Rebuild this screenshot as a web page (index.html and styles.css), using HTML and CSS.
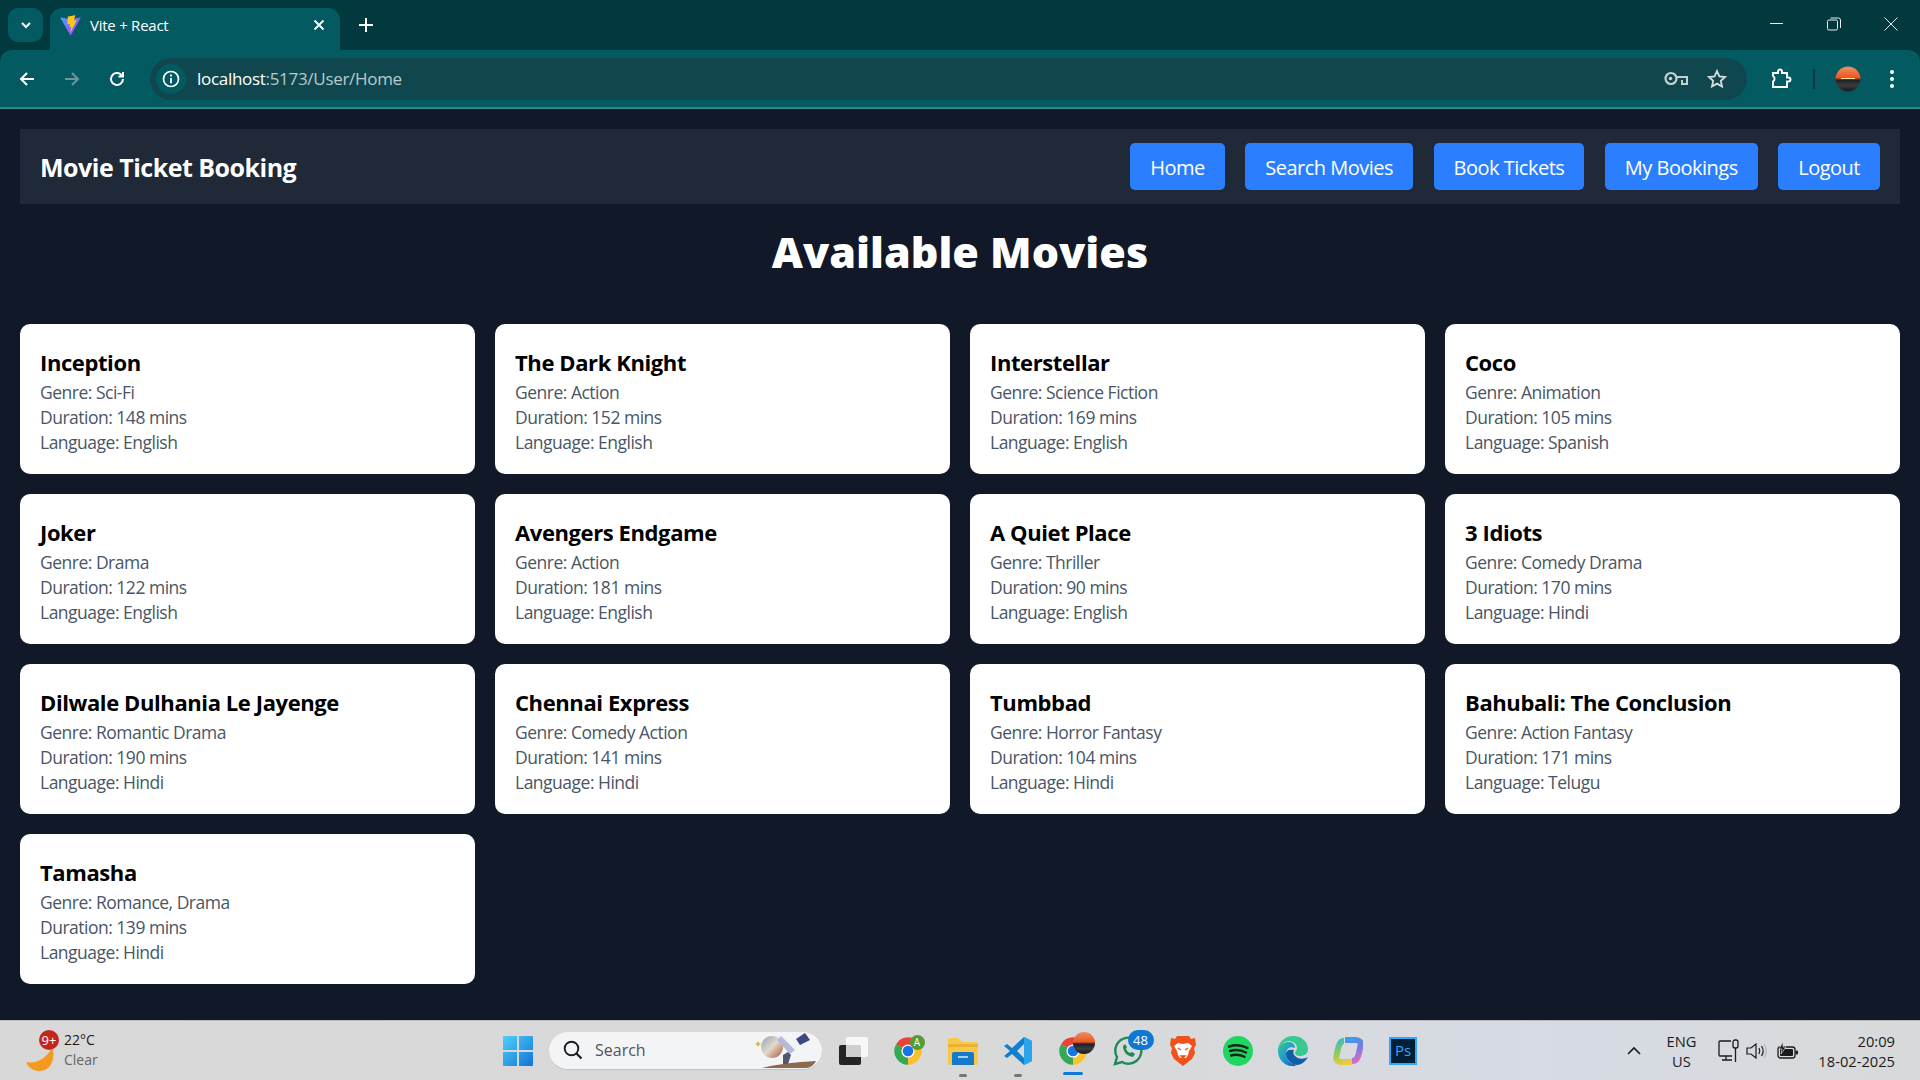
FILE: index.html
```html
<!DOCTYPE html>
<html lang="en">
<head>
  <meta charset="UTF-8">
  <title>Vite + React</title>
  <link rel="stylesheet" href="styles.css">
</head>
<body>
  <svg class="defs" width="0" height="0">
    <defs>
      <symbol id="chrome" viewBox="0 0 48 48">
        <path d="M24 24L4.95 13A22 22 0 0 1 43.05 13Z" fill="#ea4335"/>
        <path d="M24 24L43.05 13A22 22 0 0 1 24 46Z" fill="#fbc02d"/>
        <path d="M24 24L24 46A22 22 0 0 1 4.95 13Z" fill="#34a853"/>
        <circle cx="24" cy="24" r="10.5" fill="#fff"/>
        <circle cx="24" cy="24" r="8.5" fill="#1a73e8"/>
      </symbol>
      <linearGradient id="sunset" x1="0" y1="0" x2="0" y2="1">
        <stop offset="0" stop-color="#e8926a"/>
        <stop offset=".45" stop-color="#f2541b"/>
        <stop offset=".55" stop-color="#1d2024"/>
        <stop offset=".75" stop-color="#3b3d40"/>
        <stop offset="1" stop-color="#16181b"/>
      </linearGradient>
      <linearGradient id="viteBody" x1="0" y1="0" x2="1" y2="1">
        <stop offset="0" stop-color="#41a5ff"/>
        <stop offset="1" stop-color="#bd34fe"/>
      </linearGradient>
      <linearGradient id="winTile" x1="0" y1="0" x2="1" y2="1">
        <stop offset="0" stop-color="#4fd0fb"/>
        <stop offset="1" stop-color="#0f74d6"/>
      </linearGradient>
      <linearGradient id="edgeBody" x1="0" y1="0" x2="1" y2="1">
        <stop offset="0" stop-color="#39c88f"/>
        <stop offset=".55" stop-color="#1b94d6"/>
        <stop offset="1" stop-color="#0c59a4"/>
      </linearGradient>
      <linearGradient id="copilotA" gradientUnits="userSpaceOnUse" x1="12" y1="2" x2="26" y2="26">
        <stop offset="0" stop-color="#2fa5e8"/>
        <stop offset=".5" stop-color="#6f7de8"/>
        <stop offset="1" stop-color="#e56ac0"/>
      </linearGradient>
      <linearGradient id="copilotB" gradientUnits="userSpaceOnUse" x1="6" y1="4" x2="14" y2="28">
        <stop offset="0" stop-color="#3dc0b0"/>
        <stop offset=".6" stop-color="#a8cc50"/>
        <stop offset="1" stop-color="#f6c93d"/>
      </linearGradient>
      <linearGradient id="planet" x1="0" y1="0" x2="1" y2="1">
        <stop offset="0" stop-color="#8aa3b5"/>
        <stop offset=".5" stop-color="#e5d9c8"/>
        <stop offset="1" stop-color="#a5533a"/>
      </linearGradient>
    </defs>
  </svg>

  <header class="chrome">
    <div class="tabstrip">
      <div class="tab-search">
        <svg width="14" height="14" viewBox="0 0 14 14"><path d="M3 5l4 4 4-4" fill="none" stroke="#fff" stroke-width="2"/></svg>
      </div>
      <div class="tab">
        <svg class="favicon" width="21" height="25" viewBox="0 0 410 404">
          <path d="M399.641 59.5246L215.643 388.545C211.844 395.338 202.084 395.378 198.228 388.618L10.5817 59.5563C6.38087 52.1896 12.6802 43.2665 21.0281 44.7586L205.223 77.6824C206.398 77.8924 207.601 77.8904 208.776 77.6763L389.119 44.8058C397.439 43.2894 403.768 52.1434 399.641 59.5246Z" fill="url(#viteBody)"/>
          <path d="M292.965 1.5744L156.801 28.2552C154.563 28.6937 152.906 30.5903 152.771 32.8664L144.395 174.33C144.198 177.662 147.258 180.248 150.51 179.498L188.42 170.749C191.967 169.931 195.172 173.055 194.443 176.622L183.18 231.775C182.422 235.487 185.907 238.661 189.532 237.56L212.947 230.446C216.577 229.344 220.065 232.527 219.297 236.242L201.398 322.875C200.278 328.294 207.486 331.249 210.492 326.603L212.5 323.5L323.454 102.072C325.312 98.3645 322.108 94.137 318.036 94.9228L279.014 102.454C275.347 103.161 272.227 99.746 273.262 96.1583L298.731 7.86689C299.767 4.27314 296.636 0.855181 292.965 1.5744Z" fill="#ffc517"/>
        </svg>
        <span class="tab-title">Vite + React</span>
        <svg class="tab-close" width="12" height="12" viewBox="0 0 12 12"><path d="M1.5 1.5l9 9M10.5 1.5l-9 9" stroke="#fff" stroke-width="1.8"/></svg>
      </div>
      <svg class="new-tab" width="14" height="14" viewBox="0 0 14 14"><path d="M7 0v14M0 7h14" stroke="#fff" stroke-width="2"/></svg>
      <div class="window-controls">
        <svg width="14" height="14" viewBox="0 0 14 14"><path d="M0 6.5h13" stroke="#e8eeee" stroke-width="1"/></svg>
        <svg width="14" height="14" viewBox="0 0 14 14"><rect x=".5" y="3" width="10" height="10" rx="1.5" fill="none" stroke="#e8eeee"/><path d="M3.5 1h8a2 2 0 0 1 2 2v8" fill="none" stroke="#e8eeee"/></svg>
        <svg width="14" height="14" viewBox="0 0 14 14"><path d="M.5.5l13 13M13.5.5l-13 13" stroke="#e8eeee" stroke-width="1"/></svg>
      </div>
    </div>
    <div class="toolbar">
      <div class="nav-icons">
        <svg width="18" height="18" viewBox="0 0 18 18"><path d="M16 9H3M9 3L3 9l6 6" fill="none" stroke="#fff" stroke-width="2"/></svg>
        <svg width="18" height="18" viewBox="0 0 18 18"><path d="M2 9h13M9 3l6 6-6 6" fill="none" stroke="#6d9699" stroke-width="2"/></svg>
        <svg width="18" height="18" viewBox="0 0 18 18"><path d="M15 9a6 6 0 1 1-1.800-4.300L15 6.500M15 2v4.500h-4.500" fill="none" stroke="#fff" stroke-width="2"/></svg>
      </div>
      <div class="omnibox">
        <span class="site-info">
          <svg width="18" height="18" viewBox="0 0 18 18"><circle cx="9" cy="9" r="7.500" fill="none" stroke="#fff" stroke-width="1.700"/><path d="M9 8v5.200M9 4.600v1.900" stroke="#fff" stroke-width="1.800"/></svg>
        </span>
        <span class="url"><span class="url-host">localhost</span>:5173/User/Home</span>
        <svg class="omni-key" width="24" height="16" viewBox="0 0 24 16"><circle cx="7" cy="7.500" r="5.500" fill="none" stroke="#c4d0d1" stroke-width="2.200"/><circle cx="6.500" cy="7.500" r="1.800" fill="#c4d0d1"/><path d="M12 6h11v7h-5V9" fill="none" stroke="#c4d0d1" stroke-width="2"/></svg>
        <svg class="omni-star" width="20" height="20" viewBox="0 0 20 20"><path d="M10 2l2.400 5.400 5.600.6-4.200 3.800 1.200 5.700L10 14.600l-5 2.900 1.200-5.700L2 8l5.600-.6z" fill="none" stroke="#d5dedf" stroke-width="1.800"/></svg>
      </div>
      <div class="toolbar-end">
        <svg width="22" height="22" viewBox="0 0 22 22"><path d="M3 5h5V3.500a2 2 0 0 1 4 0V5h5v4.500h1.500a2 2 0 0 1 0 4H17V19H3v-5.500a3 3 0 0 0 1.500-3A3 3 0 0 0 3 8z" fill="none" stroke="#fff" stroke-width="1.900"/></svg>
        <span class="toolbar-sep"></span>
        <svg width="26" height="26" viewBox="0 0 26 26"><circle cx="13" cy="13" r="12.500" fill="url(#sunset)"/><path d="M6 12.500h14" stroke="#ffd9a0" stroke-width="1"/></svg>
        <svg class="dots" width="6" height="20" viewBox="0 0 6 20"><circle cx="3" cy="3" r="2" fill="#fff"/><circle cx="3" cy="10" r="2" fill="#fff"/><circle cx="3" cy="17" r="2" fill="#fff"/></svg>
      </div>
    </div>
  </header>

  <main class="page">
    <nav class="navbar">
      <div class="brand">Movie Ticket Booking</div>
      <div class="nav-links">
        <a class="nav-btn">Home</a>
        <a class="nav-btn">Search Movies</a>
        <a class="nav-btn">Book Tickets</a>
        <a class="nav-btn">My Bookings</a>
        <a class="nav-btn">Logout</a>
      </div>
    </nav>

    <h1 class="page-title">Available Movies</h1>

    <div class="movie-grid">
      <div class="movie-card"><h3>Inception</h3><p>Genre: Sci-Fi</p><p>Duration: 148 mins</p><p>Language: English</p></div>
      <div class="movie-card"><h3>The Dark Knight</h3><p>Genre: Action</p><p>Duration: 152 mins</p><p>Language: English</p></div>
      <div class="movie-card"><h3>Interstellar</h3><p>Genre: Science Fiction</p><p>Duration: 169 mins</p><p>Language: English</p></div>
      <div class="movie-card"><h3>Coco</h3><p>Genre: Animation</p><p>Duration: 105 mins</p><p>Language: Spanish</p></div>
      <div class="movie-card"><h3>Joker</h3><p>Genre: Drama</p><p>Duration: 122 mins</p><p>Language: English</p></div>
      <div class="movie-card"><h3>Avengers Endgame</h3><p>Genre: Action</p><p>Duration: 181 mins</p><p>Language: English</p></div>
      <div class="movie-card"><h3>A Quiet Place</h3><p>Genre: Thriller</p><p>Duration: 90 mins</p><p>Language: English</p></div>
      <div class="movie-card"><h3>3 Idiots</h3><p>Genre: Comedy Drama</p><p>Duration: 170 mins</p><p>Language: Hindi</p></div>
      <div class="movie-card"><h3>Dilwale Dulhania Le Jayenge</h3><p>Genre: Romantic Drama</p><p>Duration: 190 mins</p><p>Language: Hindi</p></div>
      <div class="movie-card"><h3>Chennai Express</h3><p>Genre: Comedy Action</p><p>Duration: 141 mins</p><p>Language: Hindi</p></div>
      <div class="movie-card"><h3>Tumbbad</h3><p>Genre: Horror Fantasy</p><p>Duration: 104 mins</p><p>Language: Hindi</p></div>
      <div class="movie-card"><h3>Bahubali: The Conclusion</h3><p>Genre: Action Fantasy</p><p>Duration: 171 mins</p><p>Language: Telugu</p></div>
      <div class="movie-card"><h3>Tamasha</h3><p>Genre: Romance, Drama</p><p>Duration: 139 mins</p><p>Language: Hindi</p></div>
    </div>
  </main>

  <footer class="taskbar">
    <div class="weather">
      <div class="weather-icon">
        <svg width="30" height="26" viewBox="0 0 30 26"><path d="M1 16c9 2 19-2 26-14 2 4 2 9 0 14-2 6-7 9-13 9-6 0-11-4-13-9z" fill="#f39a1f"/></svg>
        <span class="weather-badge">9+</span>
      </div>
      <div class="weather-text">
        <span>22°C</span>
        <span class="weather-sub">Clear</span>
      </div>
    </div>

    <div class="task-center">
      <div class="task-item">
        <svg width="30" height="30" viewBox="0 0 30 30"><path d="M0 1a1 1 0 0 1 1-1h13v14H0zM16 0h13a1 1 0 0 1 1 1v13H16zM0 16h14v14H1a1 1 0 0 1-1-1zM16 16h14v13a1 1 0 0 1-1 1H16z" fill="url(#winTile)"/></svg>
      </div>
      <div class="task-search">
        <svg width="20" height="20" viewBox="0 0 20 20"><circle cx="8.500" cy="8.500" r="6.800" fill="none" stroke="#1c1c1c" stroke-width="1.900"/><path d="M13.500 13.500l5 5" stroke="#1c1c1c" stroke-width="2.200"/></svg>
        <span>Search</span>
        <svg class="search-art" width="66" height="38" viewBox="0 0 66 38">
          <path d="M8 37c10-3 34-6 54-7-2 4-6 7-10 7z" fill="#8c6a4e"/>
          <circle cx="18" cy="16" r="11" fill="url(#planet)"/>
          <path d="M27 5l14 14-5 4L23 9z" fill="#b7b9d8"/>
          <path d="M42 8l9-6 5 7-10 5z" fill="#3c4784"/>
          <path d="M29 24l5-3 3 3-3 9h-5z" fill="#54566f"/>
          <path d="M4 10l1 2 2 1-2 1-1 2-1-2-2-1 2-1z" fill="#e4b22d"/>
        </svg>
      </div>
      <div class="task-item">
        <svg width="30" height="30" viewBox="0 0 30 30"><rect x="8" y="1" width="22" height="20" rx="2" fill="#f7f7f7"/><rect x="1" y="9" width="22" height="20" rx="2" fill="#242424"/><rect x="8" y="9" width="15" height="12" fill="#cfcfcf"/></svg>
      </div>
      <div class="task-item task-profiled">
        <svg width="30" height="30"><use href="#chrome"/></svg>
        <span class="profile-dot">A</span>
      </div>
      <div class="task-item task-open">
        <svg width="32" height="30" viewBox="0 0 32 30"><path d="M1 4a2 2 0 0 1 2-2h8l4 4h14a2 2 0 0 1 2 2v19a2 2 0 0 1-2 2H3a2 2 0 0 1-2-2z" fill="#f7c948"/><path d="M1 8h30v3H1z" fill="#eeb02f"/><path d="M5 18a2 2 0 0 1 2-2h18a2 2 0 0 1 2 2v11H5z" fill="#1878c9"/><path d="M11 21h10" stroke="#9fd2f5" stroke-width="2"/></svg>
      </div>
      <div class="task-item task-open">
        <svg width="30" height="30" viewBox="0 0 30 30"><path d="M21 1l8 4v20l-8 4-12-11-5 4-3-2 6-5-6-5 3-2 5 4z" fill="#0f7fcf"/><path d="M21 1l8 4v20l-8 4z" fill="#2ba4ee"/><path d="M21 8l-7 7 7 7z" fill="#d8d9da"/></svg>
      </div>
      <div class="task-item task-active">
        <svg width="30" height="30"><use href="#chrome"/></svg>
        <svg class="chrome-avatar" width="22" height="22" viewBox="0 0 22 22"><circle cx="11" cy="11" r="11" fill="url(#sunset)"/></svg>
      </div>
      <div class="task-item">
        <svg width="30" height="30" viewBox="0 0 30 30"><path d="M2 28l2-7a13 13 0 1 1 5 5z" fill="none" stroke="#1e8a58" stroke-width="2.400"/><path d="M10 10c0 6 4 10 10 11l2-3-3-2-2 1c-2-1-3-2-4-4l1-2-2-3z" fill="#1e8a58"/></svg>
        <span class="count-badge">48</span>
      </div>
      <div class="task-item">
        <svg width="26" height="30" viewBox="0 0 26 30"><path d="M7 0h12l2 3 4-1 1 7-2 3 1 5-3 6-9 7-9-7-3-6 1-5-2-3 1-7 4 1z" fill="#f1511b"/><path d="M8 7l5 1 5-1 4 3-3 5-1 4-2 3h-6l-2-3-1-4-3-5z" fill="#fff"/><path d="M8 12l3 2M18 12l-3 2M11 20h4l-2 2z" stroke="#f1511b" stroke-width="1.500"/></svg>
      </div>
      <div class="task-item">
        <svg width="30" height="30" viewBox="0 0 30 30"><circle cx="15" cy="15" r="15" fill="#1ed760"/><path d="M6 10.500c6-2 13-1.500 18.500 1.500M7 15c5-1.500 11-1 16 1.500M8 19.500c4-1 9-1 13.500 1.300" fill="none" stroke="#16241b" stroke-width="2.400" stroke-linecap="round"/></svg>
      </div>
      <div class="task-item">
        <svg width="30" height="30" viewBox="0 0 30 30"><path d="M15 0c9 0 15 6 15 13 0 5-4 7-8 7-3 0-5-1-5-3 0-2 2-2 2-5 0-4-4-7-8-7C6 5 2 9 0 13 1 6 7 0 15 0z" fill="#39c88f"/><path d="M0 13c2-5 6-7 11-7 4 0 6 3 6 6-5-2-9 1-9 6 0 5 4 10 11 11-2 1-3 1-5 1C6 30 0 23 0 15z" fill="url(#edgeBody)"/><path d="M8 18c0 6 6 11 12 11 4-1 8-4 10-8-3 2-9 3-13-1-2-2-2-4-1-6-4-1-8 0-8 4z" fill="#0f5ea8"/></svg>
      </div>
      <div class="task-item">
        <svg width="30" height="30" viewBox="0 0 30 30"><path d="M19 25c5 0 6-4 7-8l1.500-7c1-4-1.500-6-4.500-6H12" fill="none" stroke="url(#copilotA)" stroke-width="6"/><path d="M11 5C7 5 6 9 5 13l-1.500 7c-1 4 1.500 6 4.500 6h11" fill="none" stroke="url(#copilotB)" stroke-width="6"/></svg>
      </div>
      <div class="task-item">
        <div class="ps-icon">Ps</div>
      </div>
    </div>

    <div class="tray">
      <svg class="tray-chevron" width="14" height="10" viewBox="0 0 14 10"><path d="M1 8l6-6 6 6" fill="none" stroke="#1a1a1a" stroke-width="1.600"/></svg>
      <div class="tray-lang"><span>ENG</span><span>US</span></div>
      <div class="tray-icons">
        <svg width="22" height="24" viewBox="0 0 22 24"><path d="M14 17H2a1 1 0 0 1-1-1V3a1 1 0 0 1 1-1h11M8 17v4M4 21h10" fill="none" stroke="#1a1a1a" stroke-width="1.300"/><rect x="15" y="1" width="5" height="8" rx="2" fill="none" stroke="#1a1a1a" stroke-width="1.300"/><path d="M17.500 9v14" stroke="#1a1a1a" stroke-width="1.300"/></svg>
        <svg width="22" height="18" viewBox="0 0 22 18"><path d="M1 6h4l5-4v14l-5-4H1z" fill="none" stroke="#1a1a1a" stroke-width="1.200"/><path d="M13 6c1 2 1 4 0 6M15.500 4c2 3 2 7 0 10" fill="none" stroke="#1a1a1a" stroke-width="1.200"/><path d="M18 2c3 4 3 10 0 14" fill="none" stroke="#b5b5b5" stroke-width="1.200"/></svg>
        <svg class="tray-battery" width="22" height="18" viewBox="0 0 22 18"><rect x="1" y="5" width="17" height="11" rx="2.500" fill="none" stroke="#1a1a1a" stroke-width="1.300"/><rect x="3" y="7" width="13" height="7" rx="1" fill="#1a1a1a"/><rect x="18.500" y="8.500" width="2.500" height="4" rx="1" fill="#1a1a1a"/><path d="M6 0L2 7h3l-1 5 5-7H6z" fill="#1a1a1a" stroke="#d8d9da" stroke-width=".7"/></svg>
      </div>
      <div class="tray-clock"><span>20:09</span><span>18-02-2025</span></div>
    </div>
  </footer>
</body>
</html>
```

FILE: styles.css
```css
* {
  box-sizing: border-box;
}

html, body {
  height: 100%;
}

body {
  margin: 0;
  height: 1080px;
  overflow: hidden;
  display: flex;
  flex-direction: column;
  font-family: "Open Sans", "Noto Sans", sans-serif;
  background: #111827;
}

.defs {
  position: absolute;
}

/* browser frame */
.chrome {
  flex: none;
  height: 109px;
  background: #01393f;
  display: flex;
  flex-direction: column;
}

.tabstrip {
  height: 50px;
  display: flex;
  align-items: flex-start;
  padding: 8px 0 0 8px;
}

.tab-search {
  width: 35px;
  height: 34px;
  background: #045a61;
  border-radius: 10px;
  display: flex;
  align-items: center;
  justify-content: center;
}

.tab {
  width: 290px;
  height: 42px;
  margin-left: 7px;
  padding: 0 15px 8px 10px;
  background: #045a61;
  border-radius: 12px 12px 0 0;
  display: flex;
  align-items: center;
  color: #fff;
  font-size: 15px;
}

.favicon {
  flex: none;
}

.tab-title {
  flex: 1;
  margin-left: 9px;
  letter-spacing: -0.25px;
}

.new-tab {
  margin: 10px 0 0 19px;
}

.window-controls {
  margin-left: auto;
  height: 32px;
  padding-right: 22px;
  display: flex;
  align-items: center;
  gap: 43px;
}

.toolbar {
  height: 59px;
  background: #045a61;
  border-bottom: 2px solid #2a8c8c;
  border-radius: 12px 12px 0 0;
  display: flex;
  align-items: center;
  padding-left: 18px;
}

.nav-icons {
  display: flex;
  gap: 27px;
  width: 132px;
}

.omnibox {
  width: 1597px;
  height: 42px;
  background: #10474f;
  border-radius: 21px;
  display: flex;
  align-items: center;
  padding: 0 20px 0 6px;
}

.site-info {
  width: 30px;
  height: 30px;
  border-radius: 50%;
  background: #045a61;
  display: flex;
  align-items: center;
  justify-content: center;
}

.url {
  margin-left: 11px;
  color: #b7cbcd;
  font-size: 17px;
  letter-spacing: -0.3px;
  flex: 1;
}

.url-host {
  color: #fff;
}

.omni-key {
  margin-right: 19px;
}

.toolbar-end {
  flex: 1;
  display: flex;
  align-items: center;
  padding-left: 23px;
}

.toolbar-sep {
  width: 2px;
  height: 20px;
  margin: 0 20px 0 21px;
  background: #01393f;
}

.dots {
  margin-left: 28px;
}

/* app */
.page {
  flex: 1;
  padding: 20px;
  background: #111827;
  overflow: hidden;
}

.navbar {
  height: 75px;
  padding: 0 20px;
  background: #1f2937;
  display: flex;
  align-items: center;
  justify-content: space-between;
}

.brand {
  color: #fff;
  font-size: 25px;
  font-weight: 700;
  letter-spacing: -0.5px;
}

.nav-links {
  display: flex;
  gap: 20.5px;
}

.nav-btn {
  padding: 11px 20px 9px;
  background: #2b7fff;
  border-radius: 5px;
  color: #fff;
  font-size: 20px;
  line-height: 27px;
  letter-spacing: -0.5px;
}

.page-title {
  margin: 21px 0 45px;
  text-align: center;
  color: #fff;
  font-size: 43px;
  line-height: 54px;
  font-weight: 800;
}

.movie-grid {
  display: grid;
  grid-template-columns: repeat(4, 1fr);
  gap: 20px;
}

.movie-card {
  height: 150px;
  padding: 20px;
  background: #fff;
  border-radius: 10px;
}

.movie-card h3 {
  margin: 0;
  color: #000;
  font-size: 22px;
  line-height: 36px;
  font-weight: 700;
  letter-spacing: -0.4px;
}

.movie-card p {
  margin: 0;
  color: #4a5565;
  font-size: 17.5px;
  line-height: 25px;
  letter-spacing: -0.5px;
}

/* windows taskbar */
.taskbar {
  flex: none;
  height: 60px;
  border-top: 1px solid #b9babb;
  background: linear-gradient(90deg, #d8d8d8, #d8d9da 60%, #d6dbe4 80%, #d8d9da);
  display: grid;
  grid-template-columns: 490px auto 1fr;
  align-items: center;
  font-size: 14px;
  color: #1a1a1a;
}

.weather {
  display: flex;
  align-items: center;
  padding-left: 25px;
}

.weather-icon {
  position: relative;
  width: 39px;
  height: 42px;
  display: flex;
  align-items: flex-end;
}

.weather-badge {
  position: absolute;
  left: 14px;
  top: 0;
  width: 20px;
  height: 20px;
  border-radius: 50%;
  background: #c4261d;
  color: #fff;
  font-size: 13px;
  line-height: 20px;
  text-align: center;
}

.weather-text {
  display: flex;
  flex-direction: column;
  margin-top: -2px;
  line-height: 20px;
}

.weather-sub {
  color: #666;
}

.task-center {
  display: flex;
  align-items: center;
}

.task-item {
  position: relative;
  width: 55px;
  height: 52px;
  display: flex;
  align-items: center;
  justify-content: center;
}

.task-search {
  width: 273px;
  height: 38px;
  margin: 0 3.5px 0 4px;
  padding-left: 14px;
  background: #f3f4f5;
  border-radius: 19px;
  border-bottom: 1px solid #bfc1c4;
  display: flex;
  align-items: center;
  gap: 12px;
  font-size: 16px;
  color: #555;
}

.search-art {
  margin-left: auto;
  margin-right: 2px;
}

.profile-dot {
  position: absolute;
  right: 11px;
  top: 10px;
  width: 15px;
  height: 15px;
  border-radius: 50%;
  background: #5a9a32;
  color: #fff;
  font-size: 10px;
  line-height: 15px;
  text-align: center;
}

.task-open::after,
.task-active::after {
  content: "";
  position: absolute;
  left: 50%;
  bottom: 0;
  width: 8px;
  height: 3px;
  margin-left: -4px;
  border-radius: 2px;
  background: #777;
}

.task-active::before {
  content: "";
  position: absolute;
  z-index: -1;
  left: 5px;
  top: 2px;
  width: 43px;
  height: 48px;
  border-radius: 5px;
  background: #ebebeb;
  box-shadow: 4px 0 0 -1px #e3e3e3;
}

.task-active::after {
  width: 20px;
  margin-left: -10px;
  bottom: 2px;
  background: #0f7ad8;
}

.chrome-avatar {
  position: absolute;
  right: 6px;
  top: 7px;
}

.count-badge {
  position: absolute;
  right: 2px;
  top: 5px;
  width: 26px;
  height: 20px;
  border-radius: 10px;
  background: #0f78d4;
  color: #fff;
  font-size: 13px;
  line-height: 20px;
  text-align: center;
}

.ps-icon {
  width: 28px;
  height: 28px;
  border: 2px solid #31a8ff;
  background: #001e36;
  color: #31a8ff;
  font-size: 15px;
  line-height: 23px;
  text-align: center;
}

.tray {
  display: flex;
  align-items: center;
  padding-right: 25px;
  font-size: 14.7px;
}

.tray-chevron {
  margin-left: 196px;
}

.tray-lang {
  margin-left: 20px;
  width: 42px;
  display: flex;
  flex-direction: column;
  align-items: center;
  line-height: 20px;
}

.tray-icons {
  display: flex;
  align-items: center;
  gap: 6px;
  margin-left: 15px;
}

.tray-battery {
  margin-left: 3px;
}

.tray-clock {
  margin-left: auto;
  display: flex;
  flex-direction: column;
  align-items: flex-end;
  line-height: 20px;
}
```
